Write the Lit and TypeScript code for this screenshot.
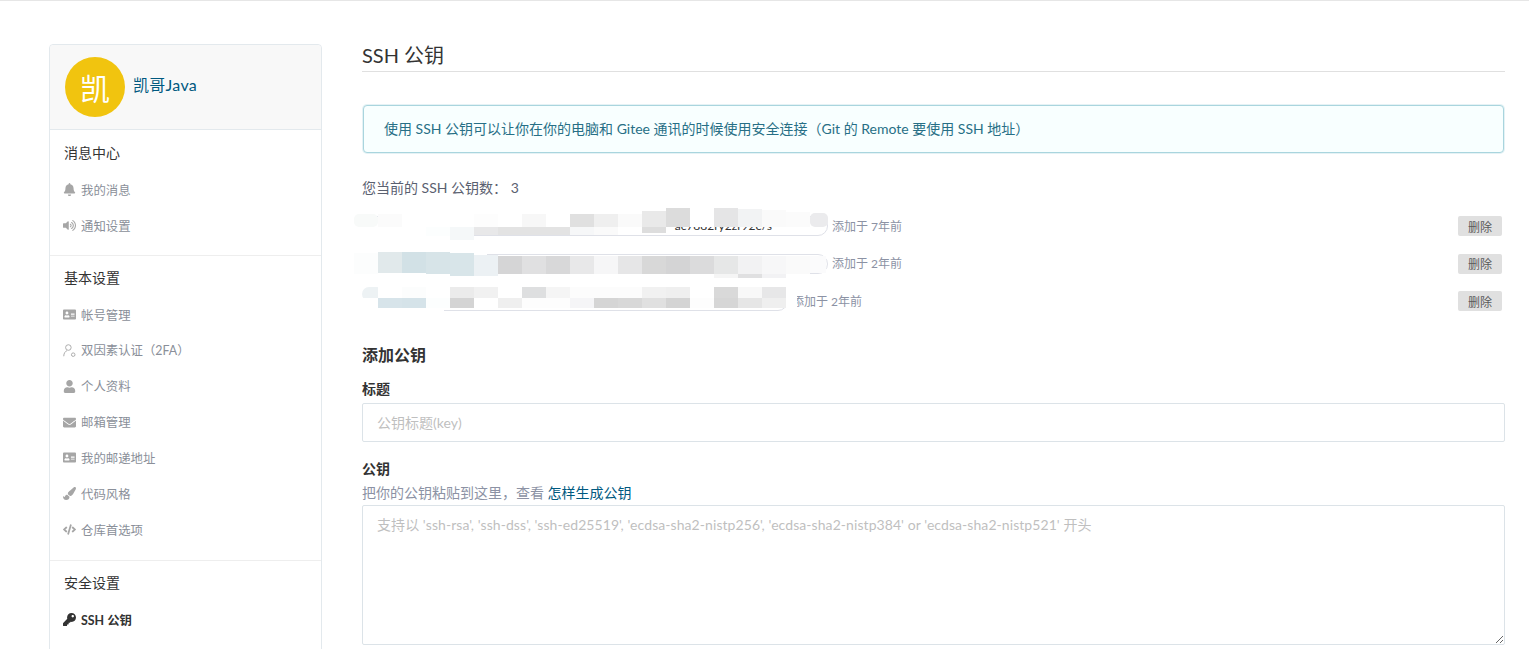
import { LitElement, html, css, svg } from "lit";
import { customElement } from "lit/decorators.js";

type Ico = { vb: string; d: string };
const I: Record<string, Ico> = {
  bell: { vb: "0 0 448 512", d: "M224 512c35.32 0 63.97-28.65 63.97-64H160.03c0 35.35 28.65 64 63.97 64zm215.39-149.71c-19.32-20.76-55.47-51.99-55.47-154.29 0-77.7-54.48-139.9-127.94-155.16V32c0-17.67-14.32-32-31.98-32s-31.98 14.33-31.98 32v20.84C118.56 68.1 64.08 130.3 64.08 208c0 102.3-36.15 133.53-55.47 154.29-6 6.45-8.66 14.16-8.61 21.71.11 16.4 12.98 32 32.1 32h383.8c19.12 0 32-15.6 32.1-32 .05-7.55-2.61-15.27-8.61-21.71z" },
  volume: { vb: "0 0 576 512", d: "M215.03 71.05L126.06 160H24c-13.26 0-24 10.74-24 24v144c0 13.25 10.74 24 24 24h102.06l88.97 88.95c15.03 15.03 40.97 4.47 40.97-16.97V88.02c0-21.46-25.96-31.98-40.97-16.97zm233.32-51.08c-11.17-7.33-26.18-4.24-33.51 6.95-7.34 11.17-4.22 26.18 6.95 33.51 66.27 43.49 105.82 116.6 105.82 195.58 0 78.98-39.55 152.09-105.82 195.58-11.17 7.32-14.29 22.34-6.95 33.5 7.04 10.71 21.93 14.56 33.51 6.95C528.27 439.58 576 351.33 576 256S528.27 72.43 448.35 19.97zM480 256c0-63.53-32.06-121.94-85.77-156.24-11.19-7.14-26.03-3.82-33.12 7.46s-3.78 26.21 7.41 33.36C408.27 165.97 432 209.11 432 256s-23.73 90.03-63.48 115.42c-11.19 7.14-14.5 22.07-7.41 33.36 6.51 10.36 21.12 15.14 33.12 7.46C447.94 377.94 480 319.54 480 256zm-141.77-76.87c-11.58-6.33-26.19-2.16-32.61 9.45-6.39 11.61-2.16 26.2 9.45 32.61C327.98 228.28 336 241.63 336 256c0 14.38-8.02 27.72-20.92 34.81-11.61 6.41-15.84 21-9.45 32.61 6.43 11.66 21.05 15.8 32.61 9.45 28.23-15.55 45.77-45 45.77-76.88s-17.54-61.32-45.78-76.86z" },
  card: { vb: "0 0 576 512", d: "M528 32H48C21.5 32 0 53.5 0 80v352c0 26.5 21.5 48 48 48h480c26.5 0 48-21.5 48-48V80c0-26.5-21.5-48-48-48zM176 128c35.3 0 64 28.7 64 64s-28.7 64-64 64-64-28.7-64-64 28.7-64 64-64zm112 237c0 10.6-10 19-22.4 19H86.4C74 384 64 375.600 64 365v-19c0-31.800 30.100-58 67.200-58h5c12.300 5.100 25.700 8 39.800 8s27.600-2.900 39.800-8h5c37.100 0 67.200 26.200 67.200 58v19zm224-29c0 4.400-3.600 8-8 8H360c-4.400 0-8-3.600-8-8v-16c0-4.400 3.600-8 8-8h144c4.400 0 8 3.600 8 8v16zm0-64c0 4.400-3.600 8-8 8H360c-4.400 0-8-3.600-8-8v-16c0-4.400 3.600-8 8-8h144c4.400 0 8 3.600 8 8v16zm0-64c0 4.400-3.600 8-8 8H360c-4.400 0-8-3.600-8-8v-16c0-4.400 3.600-8 8-8h144c4.400 0 8 3.600 8 8v16z" },
  user: { vb: "0 0 448 512", d: "M224 256c70.7 0 128-57.3 128-128S294.7 0 224 0 96 57.3 96 128s57.3 128 128 128zm89.6 32h-16.7c-22.2 10.2-46.9 16-72.9 16s-50.6-5.8-72.9-16h-16.7C60.2 288 0 348.2 0 422.4V464c0 26.5 21.5 48 48 48h352c26.5 0 48-21.5 48-48v-41.6c0-74.2-60.2-134.4-134.4-134.4z" },
  mail: { vb: "0 0 512 512", d: "M502.3 190.8c3.9-3.1 9.7-.2 9.7 4.7V400c0 26.5-21.5 48-48 48H48c-26.5 0-48-21.5-48-48V195.6c0-5 5.7-7.8 9.7-4.7 22.4 17.4 52.1 39.5 154.1 113.6 21.1 15.4 56.7 47.8 92.2 47.6 35.7.3 72-32.8 92.3-47.6 102-74.1 131.6-96.3 154-113.7zM256 320c23.2.4 56.6-29.2 73.4-41.4 132.7-96.3 142.8-104.7 173.4-128.7 5.8-4.5 9.2-11.5 9.2-18.9v-19c0-26.5-21.5-48-48-48H48C21.5 64 0 85.5 0 112v19c0 7.4 3.4 14.3 9.2 18.9 30.6 23.9 40.7 32.4 173.4 128.7 16.8 12.2 50.2 41.8 73.4 41.4z" },
  brush: { vb: "0 0 512 512", d: "M167.02 309.34c-40.12 2.58-76.53 17.86-97.19 72.3-2.35 6.21-8 9.98-14.59 9.98-11.11 0-45.46-27.67-55.25-34.35C0 439.62 37.93 512 128 512c75.86 0 128-43.77 128-120.19 0-3.11-.65-6.08-.97-9.13l-88.01-73.34zM457.89 0c-15.16 0-29.37 6.71-40.21 16.45C213.27 199.05 192 203.34 192 257.09c0 13.7 3.25 26.76 8.73 38.7l63.82 53.18c7.21 1.8 14.64 3.03 22.39 3.03 62.11 0 98.11-45.47 211.16-256.46 7.38-14.35 13.9-29.85 13.9-45.99C512 20.64 486 0 457.89 0z" },
  code: { vb: "0 0 640 512", d: "M278.9 511.5l-61-17.7c-6.4-1.8-10-8.5-8.2-14.9L346.2 8.7c1.8-6.4 8.5-10 14.9-8.2l61 17.7c6.4 1.8 10 8.5 8.2 14.9L293.8 503.3c-1.9 6.4-8.5 10.1-14.9 8.2zm-114-112.2l43.5-46.4c4.6-4.9 4.3-12.7-.8-17.2L117 256l90.6-79.7c5.1-4.5 5.5-12.3.8-17.2l-43.5-46.4c-4.5-4.8-12.1-5.1-17-.5L3.8 247.2c-5.1 4.7-5.1 12.8 0 17.5l144.1 135.1c4.9 4.6 12.5 4.4 17-.5zm327.2.6l144.1-135.1c5.1-4.7 5.1-12.8 0-17.5L492.1 112.1c-4.8-4.5-12.4-4.3-17 .5L431.6 159c-4.6 4.9-4.3 12.7.8 17.2L523 256l-90.6 79.7c-5.1 4.5-5.500 12.300-.8 17.200l43.500 46.400c4.500 4.900 12.100 5.100 17 .6z" },
  key: { vb: "0 0 512 512", d: "M512 176.001C512 273.203 433.202 352 336 352c-11.22 0-22.19-1.062-32.827-3.069l-24.012 27.014A23.999 23.999 0 0 1 261.223 384H224v40c0 13.255-10.745 24-24 24h-40v40c0 13.255-10.745 24-24 24H24c-13.255 0-24-10.745-24-24v-78.059c0-6.365 2.529-12.47 7.029-16.971l161.802-161.802C163.108 213.814 160 195.271 160 176 160 78.798 238.797.001 335.999 0 433.488-.001 512 78.511 512 176.001zM336 128c0 26.51 21.49 48 48 48s48-21.49 48-48-21.49-48-48-48-48 21.49-48 48z" },
};

const icon = (n: string) => {
  if (n === "two") {
    return html`<svg class="ic" viewBox="0 0 14 14" fill="none" stroke="currentColor" stroke-width="1">
      <circle cx="5.800" cy="3.800" r="3"></circle>
      <path d="M0.800 13.200c0-3.500 2-5.500 3.400-6"></path>
      <circle cx="11" cy="11.500" r="1.900"></circle>
    </svg>`;
  }
  const i = I[n];
  return html`<svg class="ic" viewBox=${i.vb} fill="currentColor"><path d=${i.d}></path></svg>`;
};

const SECTIONS = [
  { title: "消息中心", cls: "first", items: [["bell", "我的消息"], ["volume", "通知设置"]] },
  { title: "基本设置", cls: "second", items: [["card", "帐号管理"], ["two", "双因素认证（2FA）"], ["user", "个人资料"], ["mail", "邮箱管理"], ["card", "我的邮递地址"], ["brush", "代码风格"], ["code", "仓库首选项"]] },
];

const KEYS = [
  { width: 466, text: "ac7882ry2zr92e/s", age: "添加于 7年前" },
  { width: 466, text: "", age: "添加于 2年前" },
  { width: 426, text: "", age: "添加于 2年前" },
];

type Cell = [number, number, number, number, string, number?];
const col = (n: number) => 354 + 24 * n;
const row = (y: number, h: number, cs: (string | null)[]) =>
  cs.map((c, n) => (c ? [col(n), 24, y, h, c] : null)).filter(Boolean) as Cell[];

const CELLS: Cell[] = [
  // key 1, upper band
  [354, 24, 214, 13, "#f8faf9", 5],
  ...row(214, 13, [null, "#fbfbfb", "#fff", "#fff", "#fff", "#fdfdfd", "#fff", "#f7f7f7", "#fff", "#e0e0e0", "#efefef", "#fafafa"]),
  [642, 24, 211, 16, "#e9e9e9"], [666, 24, 208, 19, "#dcdcdc"], [690, 24, 208, 19, "#fff"], [714, 24, 208, 19, "#e5e5e6"],
  [738, 24, 209, 18, "#f2f3f4"], [762, 24, 210, 17, "#fafafa"], [786, 24, 212, 15, "#fbfbfb"], [810, 18, 213, 14, "#ebebed", 5],
  // key 1, lower band
  [354, 72, 227, 13, "#fff"], [426, 24, 227, 9, "#fcfefe"], [450, 24, 227, 13, "#f5f8f9"],
  [474, 24, 227, 8, "#e8e8e9"], [498, 24, 227, 8, "#e3e3e3"], [522, 24, 227, 8, "#e3e3e3"], [546, 24, 227, 8, "#e3e3e3"],
  [570, 24, 227, 8, "#f6f7f8"], [594, 24, 227, 8, "#fafafa"], [618, 24, 227, 8, "#fff"], [642, 24, 227, 6, "#dddddd"],
  // key 2
  [354, 133, 250, 30, "#fff"],
  [354, 24, 253, 21, "#fcfdfd"],
  [378, 24, 252, 21, "#e1e9eb"], [402, 24, 252, 21, "#d2e1e6"], [426, 24, 252, 22, "#d7e4e8"], [450, 24, 253, 23, "#d8e5e9"], [474, 24, 255, 21, "#ecf1f4"],
  ...row(256, 18, [null, null, null, null, null, null, "#d5d5d6", "#e0e0e1", "#d8d8d9", "#e8e8e9", "#f6f6f7", "#e6e6e7", "#d8d8d8", "#d4d4d5", "#dbdbdc", "#e6e7e7", "#f2f2f3", "#f7f7f8", "#fafafa"]),
  [810, 16, 256, 17, "#fbfbfc"],
  [714, 24, 274, 4, "#f5f5f5"], [738, 24, 274, 4, "#e0e0e1"], [762, 24, 274, 4, "#f2f2f4"],
  // key 3
  [354, 90, 284, 28, "#fff"],
  [362, 22, 287, 14, "#edf2f4", 7],
  [354, 30, 298, 12, "#fff"],
  ...row(287, 11, [null, "#fff", "#fcfdfd", "#fff", "#ebebeb", "#f1f1f1", "#fff", "#dedfe0", "#f5f5f5", "#fcfcfc", "#fcfcfc", "#fcfcfc", "#f1f1f1", "#efefef", "#fff", "#d9d9d9", "#f8f8f8", "#e7e7e8"]),
  ...row(298, 10, [null, "#d7e4ea", "#d5e3e9", "#fcfefe", "#d4d4d4", "#fff", "#efefef", "#fdfdfd", "#fdfdfd", "#f5f5f7", "#d5d5d5", "#d8d8d8", "#e0e0e0", "#d4d4d4", "#fdfdfd", "#d6d6d6", "#e6e6e6", "#efefef"]),
  [786, 11, 287, 24, "#fff"],
];

@customElement("app-root")
export class AppRoot extends LitElement {
  static styles = css`
    :host {
      display: block;
      height: 649px;
      overflow: hidden;
      box-sizing: border-box;
      border-top: 1px solid #e6e6e6;
      background: #fff;
      font-family: "Lato", "Noto Sans CJK SC", sans-serif;
      color: #40485b;
    }
    .page { display: flex; padding: 43px 24px 0 49px; align-items: flex-start; }
    .side { width: 273px; flex: none; box-sizing: border-box; border: 1px solid #e3e9ed; border-radius: 4px; }
    .head {
      display: flex; align-items: center; gap: 8px; height: 85px; box-sizing: border-box;
      padding: 0 15px; background: #f8f8f8; border-bottom: 1px solid #e3e9ed; border-radius: 4px 4px 0 0;
    }
    .avatar {
      width: 60px; height: 60px; border-radius: 50%; background: #f1c40f; color: #fff;
      display: flex; align-items: center; justify-content: center; font-size: 30px; flex: none;
    }
    .name { color: #005980; font-size: 16px; letter-spacing: 0.3px; padding-bottom: 7px; }
    .sec { padding: 12px 0 12px; border-bottom: 1px solid #eeeeee; }
    .sec.first { padding: 13px 0 11px; }
    .sec.last { border-bottom: 0; padding-bottom: 60px; }
    .sec-title { font-size: 14px; line-height: 20px; color: #333; padding-left: 14px; margin-bottom: 9px; }
    .item {
      display: flex; align-items: center; gap: 5px; height: 35.85px; padding-left: 13px;
      font-size: 12.4px; color: #8a8f99;
    }
    .item .ic { color: #a6a6a6; }
    .item.on { color: #333; font-weight: 700; }
    .item.on .ic { color: #333; }
    .ic { width: 13px; height: 13px; flex: none; }

    .main { margin-left: 40px; width: 1143px; flex: none; }
    .title {
      margin: -1px 0 0; font-size: 20px; font-weight: 400; line-height: 24px; color: #333;
      padding-bottom: 4px; border-bottom: 1px solid #e0e0e0;
    }
    .alert {
      margin: 33px 1px 0; height: 48px; box-sizing: border-box; padding: 0 0 2px 20px;
      display: flex; align-items: center; font-size: 14px; color: #276f86;
      background: #f8ffff; border: 1px solid #a9d5de; border-radius: 4px;
      box-shadow: 0 0 0 1px rgba(169, 213, 222, 0.3);
    }
    .count { margin-top: 25px; font-size: 14px; line-height: 20px; color: #5a6070; }
    .keys { position: relative; margin-top: 18px; }
    .key-row { display: flex; align-items: center; height: 20px; margin-bottom: 17.5px; }
    .pill {
      box-sizing: border-box; height: 20px; border: 1px solid #dfe1e8; border-radius: 10px; background: #fff;
      text-align: right; padding-right: 55px; font-size: 12px; line-height: 18px; color: #333;
    }
    .age { margin-left: 4px; padding-bottom: 2px; font-size: 12px; color: #8c92a4; }
    .del {
      margin: 0 3px 0 auto; width: 44px; height: 20px; padding: 0; border: 0; border-radius: 2px;
      background: #e0e0e0; color: #5a5a5a; font-size: 12px; font-family: inherit;
    }
    .mosaic { position: absolute; left: -12px; top: -8px; pointer-events: none; }
    h3 { margin: 31.5px 0 0; font-size: 16px; line-height: 24px; font-weight: 700; color: #333; }
    label { display: block; font-size: 14px; line-height: 18px; font-weight: 700; color: #333; }
    .l1 { margin-top: 13px; }
    .l2 { margin-top: 18px; }
    .field {
      display: block; width: 100%; box-sizing: border-box; border: 1px solid #dce3e8; border-radius: 2px; outline: 0;
      padding: 0 14px; font-size: 14px; font-family: inherit; color: #333; background: #fff;
    }
    .field::placeholder { color: #bfbfbf; opacity: 1; }
    input.field { margin-top: 5px; height: 39px; }
    textarea.field { margin-top: 3px; height: 140px; padding-top: 10px; resize: vertical; line-height: 18px; letter-spacing: 0.07px; }
    .help { margin-top: 6px; font-size: 14px; line-height: 18px; color: #8c92a4; }
    .help a { color: #005980; text-decoration: none; }
  `;

  render() {
    return html`
      <div class="page">
        <aside class="side">
          <div class="head">
            <div class="avatar">凯</div>
            <span class="name">凯哥Java</span>
          </div>
          ${SECTIONS.map((s) => html`
            <div class="sec ${s.cls}">
              <div class="sec-title">${s.title}</div>
              ${s.items.map(([ic, t]) => html`<div class="item">${icon(ic)}<span>${t}</span></div>`)}
            </div>`)}
          <div class="sec last">
            <div class="sec-title">安全设置</div>
            <div class="item on">${icon("key")}<span>SSH 公钥</span></div>
          </div>
        </aside>
        <main class="main">
          <h2 class="title">SSH 公钥</h2>
          <div class="alert">使用 SSH 公钥可以让你在你的电脑和 Gitee 通讯的时候使用安全连接（Git 的 Remote 要使用 SSH 地址）</div>
          <div class="count">您当前的 SSH 公钥数： 3</div>
          <div class="keys">
            ${KEYS.map((k) => html`
              <div class="key-row">
                <div class="pill" style="width:${k.width}px">${k.text}</div>
                <span class="age">${k.age}</span>
                <button class="del">删除</button>
              </div>`)}
            <svg class="mosaic" width="490" height="110" viewBox="350 208 490 110">
              ${CELLS.map(([x, w, y, h, c, r]) => svg`<rect x=${x} y=${y} width=${w} height=${h} rx=${r ?? 0} fill=${c}></rect>`)}
            </svg>
          </div>
          <h3>添加公钥</h3>
          <label class="l1">标题</label>
          <input class="field" placeholder="公钥标题(key)" />
          <label class="l2">公钥</label>
          <div class="help">把你的公钥粘贴到这里，查看 <a href="#">怎样生成公钥</a></div>
          <textarea class="field" placeholder="支持以 'ssh-rsa', 'ssh-dss', 'ssh-ed25519', 'ecdsa-sha2-nistp256', 'ecdsa-sha2-nistp384' or 'ecdsa-sha2-nistp521' 开头"></textarea>
        </main>
      </div>
    `;
  }
}
